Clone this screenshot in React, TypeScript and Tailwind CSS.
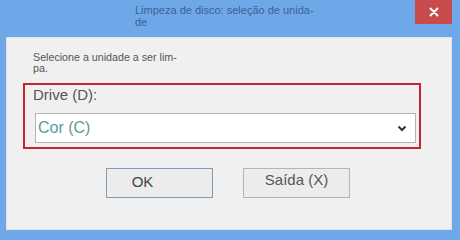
export default function App() {
  return (
    <div
      className="w-[460px] h-[240px] bg-[#6ea8e9] flex flex-col overflow-hidden"
      style={{ fontFamily: '"Liberation Sans", Arial, sans-serif' }}
    >
      <div className="h-[37px] flex">
        <div className="w-[135px] shrink-0" />
        <div className="w-[190px] pt-[4px] text-[11px] leading-[12px] text-[#3d5f95]">
          Limpeza de disco: seleção de unida-
          <br />
          de
        </div>
        <div className="flex-1" />
        <div className="w-[37px] h-[24px] bg-[#c94a4b] flex items-center justify-center mr-[8px]">
          <svg width="10" height="10" viewBox="0 0 10 10">
            <path d="M1.5 1.5 L8.5 8.5 M8.5 1.5 L1.5 8.5" stroke="#fff" strokeWidth="2" strokeLinecap="round" />
          </svg>
        </div>
      </div>
      <div className="ml-[6px] w-[446px] h-[193px] bg-[#f0f0f0] border border-[#dde3ea] flex flex-col">
        <div className="pl-[26px] pt-[14px] text-[10.7px] leading-[11px] text-[#555]">
          Selecione a unidade a ser lim-
          <br />
          pa.
        </div>
        <div className="ml-[16px] mt-[9px] w-[398px] h-[66px] border-2 border-[#c8222e] flex flex-col">
          <div className="pl-[8px] pt-[1px] text-[15px] leading-[18px] text-[#555]">Drive (D):</div>
          <div className="ml-[10px] mt-[9px] w-[381px] h-[30px] bg-white border border-[#b3b3b3] flex items-center justify-between pl-[2px] pr-[8px]">
            <span className="text-[16px] text-[#5b9a9d]">Cor (C)</span>
            <svg width="10" height="7" viewBox="0 0 10 7">
              <path d="M1.5 1.5 L5 5 L8.5 1.5" stroke="#333" strokeWidth="2" fill="none" />
            </svg>
          </div>
        </div>
        <div className="mt-[19px] flex">
          <div className="w-[99px] shrink-0" />
          <button className="w-[107px] h-[30px] bg-[#ececec] border border-[#7d9db8] text-[15px] text-[#444] pr-[34px] pb-[1px]">
            OK
          </button>
          <div className="w-[30px] shrink-0" />
          <button className="w-[107px] h-[30px] bg-[#ececec] border border-[#b5b5b5] text-[15px] text-[#555] pb-[5px]">
            Saída (X)
          </button>
        </div>
      </div>
    </div>
  )
}
